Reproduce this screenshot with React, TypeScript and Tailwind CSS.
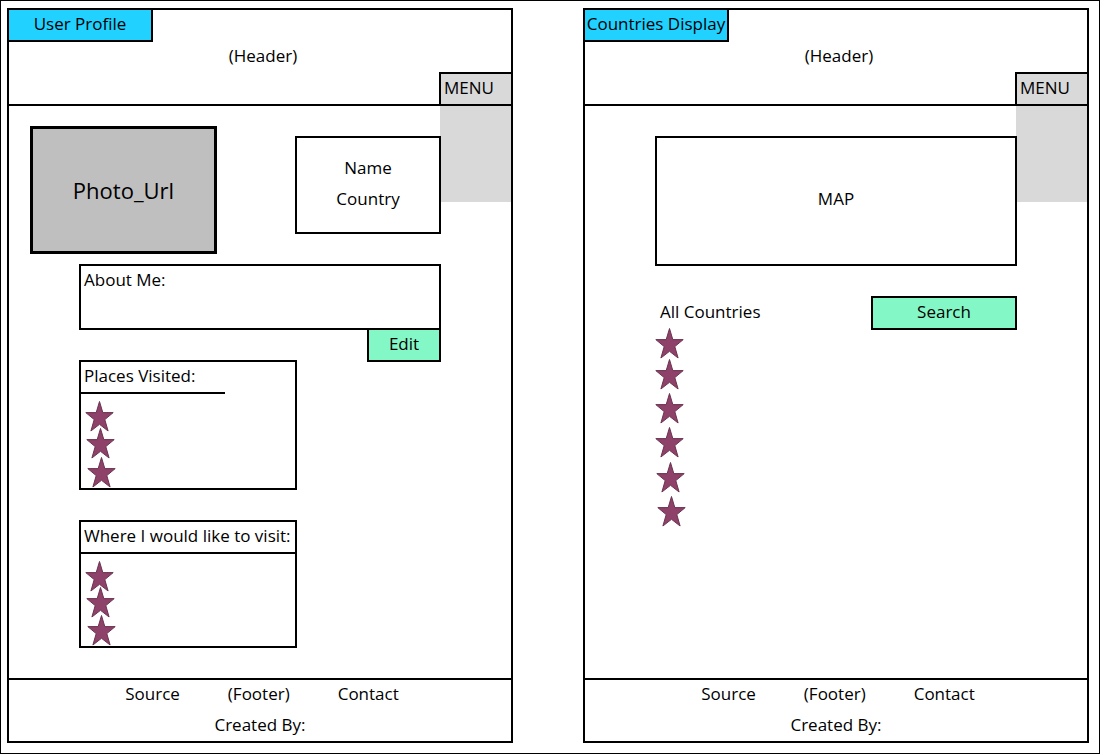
import type { ReactNode } from "react";

type Point = [number, number];

const STAR = "14,0.5 17.3,11.6 27.7,11.6 19.3,18.6 22.6,30 14,23.3 5.4,30 8.7,18.6 0.3,11.6 10.7,11.6";

function Stars({ points, label }: { points: Point[]; label: string }) {
  const height = points[points.length - 1][1] + 31;
  return (
    <svg width="31" height={height} role="img" aria-label={label} className="block shrink-0">
      {points.map(([x, y]) => (
        <polygon
          key={y}
          points={STAR}
          transform={`translate(${x + 0.5} ${y})`}
          fill="#8e4169"
          stroke="#6b3350"
          strokeWidth="1"
        />
      ))}
    </svg>
  );
}

function Panel({ title, children }: { title: string; children: ReactNode }) {
  return (
    <section className="flex min-w-0 flex-col border-2 border-black">
      <header className="border-b-2 border-black">
        <h1 className="flex h-8 w-36 items-center justify-center border-r-2 border-b-2 border-black bg-[#21d1ff] pb-0.5 whitespace-nowrap">
          {title}
        </h1>
        <p className="flex h-[30px] items-center justify-center pb-0.5 pl-1.5">(Header)</p>
        <div className="flex justify-end">
          <button type="button" className="h-8 w-18 border-t-2 border-l-2 border-black bg-[#d9d9d9] pb-0.5 pl-[3px] text-left">
            MENU
          </button>
        </div>
      </header>
      <main className="flex flex-1">
        <div className="relative min-w-0 flex-1 pb-[30px]">{children}</div>
        <aside aria-label="Menu" className="-ml-px h-24 w-[71px] bg-[#d9d9d9]" />
      </main>
      <footer className="border-t-2 border-black pb-0.5 leading-7">
        <nav className="flex justify-center gap-12 pl-1">
          <a href="#source">Source</a>
          <span>(Footer)</span>
          <a href="#contact">Contact</a>
        </nav>
        <p className="mt-[3px] text-center">Created By:</p>
      </footer>
    </section>
  );
}

function UserProfile() {
  return (
    <Panel title="User Profile">
      <div className="flex items-start justify-between pt-5 pl-[21px]">
        <div className="flex h-32 w-[187px] items-center justify-center border-3 border-black bg-[#bfbfbf] text-[22px]">
          Photo_Url
        </div>
        <div className="mt-2.5 flex h-[98px] w-[146px] flex-col items-center justify-center border-2 border-black bg-white pb-1 leading-[31px]">
          <p>Name</p>
          <p>Country</p>
        </div>
      </div>
      <div className="mt-2.5 flex flex-col pl-[70px]">
        <div className="h-[66px] border-2 border-black pl-[3px] leading-7">
          <h2>About Me:</h2>
        </div>
        <button type="button" className="-mt-0.5 h-[34px] w-[74px] self-end border-2 border-black bg-[#84f7c6] pb-0.5">
          Edit
        </button>
        <div className="-mt-0.5 h-[130px] w-[218px] border-2 border-black">
          <h2 className="h-8 w-36 border-b-2 border-black pl-[3px] leading-7">Places Visited:</h2>
          <div className="pt-[7px] pl-1">
            <Stars label="Places visited" points={[[0, 0], [1, 27], [2, 56]]} />
          </div>
        </div>
        <div className="mt-[30px] h-32 w-[218px] border-2 border-black">
          <h2 className="h-8 border-b-2 border-black pl-[3px] leading-7 whitespace-nowrap">Where I would like to visit:</h2>
          <div className="pt-[7px] pl-1">
            <Stars label="Places to visit" points={[[0, 0], [1, 26], [2, 54]]} />
          </div>
        </div>
      </div>
    </Panel>
  );
}

function CountriesDisplay() {
  return (
    <Panel title="Countries Display">
      <div className="pt-[30px] pl-[70px]">
        <div className="flex h-[130px] items-center justify-center border-2 border-black bg-white pb-1">MAP</div>
        <div className="mt-[30px] flex h-[34px] items-center justify-between pl-[5px]">
          <h2 className="pb-0.5">All Countries</h2>
          <button type="button" className="h-[34px] w-[146px] border-2 border-black bg-[#84f7c6] pb-0.5">
            Search
          </button>
        </div>
        <div className="-mt-0.5">
          <Stars label="Countries" points={[[0, 0], [0, 31], [0, 65], [0, 99], [1, 134], [2, 168]]} />
        </div>
      </div>
    </Panel>
  );
}

export default function App() {
  return (
    <div className="grid min-h-screen grid-cols-2 gap-[70px] border border-black bg-white pt-[7px] pr-2.5 pb-2.5 pl-1.5 font-['Open_Sans',sans-serif] text-[17px] leading-6 text-black">
      <UserProfile />
      <CountriesDisplay />
    </div>
  );
}
